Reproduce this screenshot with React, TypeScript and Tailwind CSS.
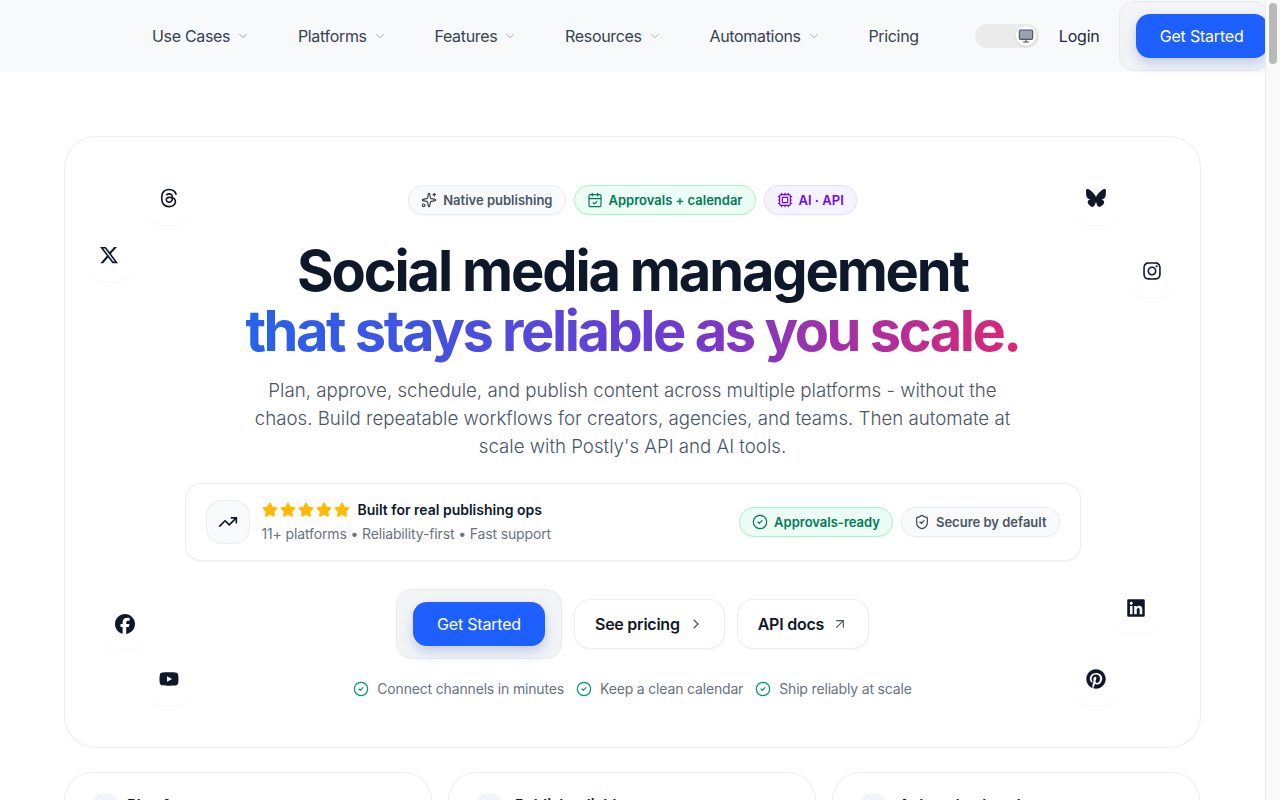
import {
  ArrowUpRight,
  CalendarCheck,
  ChevronDown,
  ChevronRight,
  CircleCheck,
  Cpu,
  Monitor,
  ShieldCheck,
  Sparkles,
  Star,
  TrendingUp,
} from "lucide-react";
import type { ComponentType, ReactNode } from "react";
import {
  FaBluesky,
  FaFacebook,
  FaInstagram,
  FaLinkedin,
  FaPinterest,
  FaThreads,
  FaXTwitter,
  FaYoutube,
} from "react-icons/fa6";

const navigation = [
  { label: "Use Cases", caret: true },
  { label: "Platforms", caret: true },
  { label: "Features", caret: true },
  { label: "Resources", caret: true },
  { label: "Automations", caret: true },
  { label: "Pricing", caret: false },
];

type FloatingIcon = {
  icon: ComponentType<{ className?: string }>;
  place: string;
};

const floatingIcons: FloatingIcon[] = [
  { icon: FaThreads, place: "left-[82px] top-[34px]" },
  { icon: FaXTwitter, place: "left-[22px] top-[91px]" },
  { icon: FaBluesky, place: "left-[1009px] top-[34px]" },
  { icon: FaInstagram, place: "left-[1065px] top-[107px]" },
  { icon: FaFacebook, place: "left-[38px] top-[460px]" },
  { icon: FaYoutube, place: "left-[82px] top-[515px]" },
  { icon: FaLinkedin, place: "left-[1049px] top-[444px]" },
  { icon: FaPinterest, place: "left-[1009px] top-[515px]" },
];

const checks = ["Connect channels in minutes", "Keep a clean calendar", "Ship reliably at scale"];

const cards = [
  { title: "Plan & approve", gap: "gap-1.5" },
  { title: "Publish reliably", gap: "gap-2.5" },
  { title: "Automate at scale", gap: "gap-2.5" },
];

function Pill({ className, children }: { className: string; children: ReactNode }) {
  return (
    <span
      className={`inline-flex h-[30px] items-center gap-1.5 rounded-full border px-3 text-[13px] font-semibold shadow-[0_1px_2px_rgba(15,23,42,0.04)] ${className}`}
    >
      {children}
    </span>
  );
}

function GetStarted({ inHeader }: { inHeader?: boolean }) {
  return (
    <div
      className={`flex h-[70px] shrink-0 items-center rounded-2xl border border-gray-200/80 bg-[#f3f4f6] ${
        inHeader ? "pl-4" : "px-4"
      }`}
    >
      <button
        type="button"
        className="h-11 w-[132px] rounded-[14px] bg-[#1d5fff] text-base tracking-[-0.0125em] text-white shadow-[0_8px_16px_rgba(29,95,255,0.12),0_4px_10px_rgba(15,23,42,0.1)]"
      >
        Get Started
      </button>
    </div>
  );
}

export default function App() {
  return (
    <div className="flex h-screen overflow-hidden bg-white font-['Inter',sans-serif] text-gray-900">
      <div className="min-w-0 flex-1 overflow-hidden">
        <header className="flex h-[72px] items-center bg-[#f8f9fa] pl-[152px]">
          <nav className="flex shrink-0 items-center gap-[47.7px]">
            {navigation.map((item) => (
              <a
                key={item.label}
                className="flex items-center gap-1.5 whitespace-nowrap text-base tracking-[-0.02em] text-gray-700"
              >
                {item.label}
                {item.caret && <ChevronDown className="h-3.5 w-3.5 text-gray-400" strokeWidth={1.5} />}
              </a>
            ))}
          </nav>
          <div className="ml-14 flex h-6 w-16 shrink-0 items-center justify-end rounded-full bg-[#ebebec] pr-[3px]">
            <span className="flex h-5 w-5 items-center justify-center rounded-full bg-white shadow-sm">
              <Monitor className="h-4 w-4 fill-gray-400 text-gray-600" strokeWidth={1.75} />
            </span>
          </div>
          <a className="ml-5 shrink-0 text-base tracking-[-0.012em] text-gray-800">Login</a>
          <div className="ml-[19px] mt-[-1px]">
            <GetStarted inHeader />
          </div>
        </header>

        <main className="ml-16 w-[1137px] pb-10 pt-16">
          <section className="relative flex h-[612px] flex-col items-center rounded-[32px] border border-gray-200/70 bg-white pt-[48px] shadow-[0_1px_2px_rgba(15,23,42,0.02)]">
            {floatingIcons.map(({ icon: Icon, place }, index) => (
              <span
                key={index}
                className={`absolute flex h-[54px] w-11 items-center justify-center rounded-2xl bg-white shadow-[0_1px_1px_rgba(15,23,42,0.035)] ${place}`}
              >
                <Icon className="h-5 w-5 text-slate-900" />
              </span>
            ))}

            <div className="flex items-center gap-2">
              <Pill className="border-gray-200/70 bg-slate-50 text-gray-600">
                <Sparkles className="h-4 w-4 text-gray-700" strokeWidth={1.75} />
                <span className="pt-px">Native publishing</span>
              </Pill>
              <Pill className="border-emerald-200 bg-emerald-50 text-emerald-700">
                <CalendarCheck className="h-4 w-4" strokeWidth={1.75} />
                <span className="pt-px">Approvals + calendar</span>
              </Pill>
              <Pill className="border-violet-200/70 bg-violet-50 text-violet-700">
                <Cpu className="h-4 w-4" strokeWidth={1.75} />
                <span className="pt-px">AI · API</span>
              </Pill>
            </div>

            <h1 className="mt-[26px] whitespace-nowrap text-center text-[56px] font-bold leading-[60px] tracking-[-0.0385em] text-slate-900">
              Social media management
              <br />
              <span className="bg-[linear-gradient(90deg,#2563eb,#6d3bd1_55%,#db2777)] bg-clip-text tracking-[-0.044em] text-transparent">
                that stays reliable as you scale.
              </span>
            </h1>

            <p className="mt-4 w-[768px] text-center text-[18.7px] font-light leading-7 text-gray-600">
              Plan, approve, schedule, and publish content across multiple platforms - without the chaos. Build repeatable
              workflows for creators, agencies, and teams. Then automate at scale with Postly's API and AI tools.
            </p>

            <div className="mt-[22px] flex h-[78px] w-[896px] items-center justify-between rounded-2xl border border-gray-200/70 bg-white px-5 shadow-[0_1px_2px_rgba(15,23,42,0.05)]">
              <div className="flex items-center gap-3">
                <span className="flex h-11 w-11 items-center justify-center rounded-2xl border border-gray-200/70 bg-slate-50">
                  <TrendingUp className="h-5 w-5 text-gray-900" strokeWidth={2} />
                </span>
                <div>
                  <div className="flex items-center gap-2">
                    <span className="flex gap-[2px]">
                      {[0, 1, 2, 3, 4].map((n) => (
                        <Star key={n} className="h-4 w-4 fill-amber-400 text-amber-400" />
                      ))}
                    </span>
                    <span className="text-sm font-semibold leading-5 text-gray-900">Built for real publishing ops</span>
                  </div>
                  <p className="mt-[4px] text-sm leading-5 tracking-[-0.01em] text-gray-500">
                    11+ platforms • Reliability-first • Fast support
                  </p>
                </div>
              </div>
              <div className="flex items-center gap-2">
                <Pill className="border-emerald-200 bg-emerald-50 text-emerald-700">
                  <CircleCheck className="h-4 w-4" strokeWidth={1.75} />
                  <span className="pt-px">Approvals-ready</span>
                </Pill>
                <Pill className="border-gray-200/70 bg-slate-50 text-gray-600">
                  <ShieldCheck className="h-4 w-4 text-gray-700" strokeWidth={1.75} />
                  <span className="pt-px">Secure by default</span>
                </Pill>
              </div>
            </div>

            <div className="mt-[28px] flex items-center gap-3">
              <GetStarted />
              <a className="flex h-[50px] items-center gap-2 rounded-2xl border border-gray-200/70 bg-white px-5 text-base font-semibold tracking-[-0.015em] text-gray-900 shadow-[0_1px_2px_rgba(15,23,42,0.04)]">
                See pricing
                <ChevronRight className="h-4 w-4 text-gray-600" strokeWidth={1.75} />
              </a>
              <a className="flex h-[50px] items-center gap-2 rounded-2xl border border-gray-200/70 bg-white px-5 text-base font-semibold tracking-[-0.015em] text-gray-900 shadow-[0_1px_2px_rgba(15,23,42,0.04)]">
                API docs
                <ArrowUpRight className="h-4 w-4 text-gray-600" strokeWidth={1.75} />
              </a>
            </div>

            <div className="mt-5 flex items-center gap-3">
              {checks.map((item) => (
                <span key={item} className="flex items-center gap-2 text-sm tracking-[-0.012em] text-gray-500">
                  <CircleCheck className="h-4 w-4 text-emerald-600" strokeWidth={1.75} />
                  {item}
                </span>
              ))}
            </div>
          </section>

          <section className="mt-6 grid w-[1136px] grid-cols-3 gap-4">
            {cards.map((card) => (
              <div
                key={card.title}
                className={`flex h-40 rounded-[28px] border border-gray-200/70 bg-white px-6 pt-5 ${card.gap}`}
              >
                <span className="h-8 w-8 shrink-0 rounded-full bg-slate-100" />
                <span className="mt-[2px] text-[15px] font-semibold leading-5 text-gray-900">{card.title}</span>
              </div>
            ))}
          </section>
        </main>
      </div>

      <aside className="w-[15px] shrink-0 border-l border-gray-200/70 bg-[#fafafa] pl-[3px] pt-[3px]">
        <div className="h-[61px] w-2 rounded-full bg-[#b9b9b9]" />
      </aside>
    </div>
  );
}
